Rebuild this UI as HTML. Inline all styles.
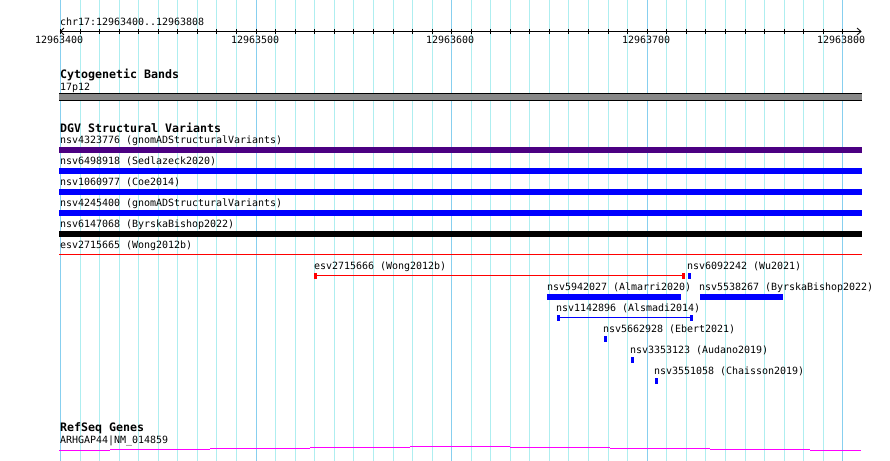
<!DOCTYPE html>
<html>
<head>
<meta charset="utf-8">
<style>
html,body{margin:0;padding:0;background:#fff;width:890px;height:461px;overflow:hidden}
svg{display:block;position:absolute;left:0;top:0}
text{font-family:"DejaVu Sans Mono","Liberation Mono",monospace;font-size:10px;letter-spacing:-0.02px;fill:#000;white-space:pre;text-rendering:geometricPrecision}
text.b{font-weight:bold;font-size:11.63px;letter-spacing:0}
</style>
</head>
<body>
<svg width="890" height="461" viewBox="0 0 890 461" shape-rendering="crispEdges">
<rect width="890" height="461" fill="#fff"/>
<path stroke="#aeeef0" stroke-width="1" fill="none" d="M80.5 0V461M99.5 0V461M119.5 0V461M138.5 0V461M158.5 0V461M177.5 0V461M197.5 0V461M216.5 0V461M236.5 0V461M275.5 0V461M295.5 0V461M314.5 0V461M334.5 0V461M353.5 0V461M373.5 0V461M393.5 0V461M412.5 0V461M432.5 0V461M471.5 0V461M490.5 0V461M510.5 0V461M529.5 0V461M549.5 0V461M568.5 0V461M588.5 0V461M608.5 0V461M627.5 0V461M666.5 0V461M686.5 0V461M705.5 0V461M725.5 0V461M745.5 0V461M764.5 0V461M784.5 0V461M803.5 0V461M823.5 0V461"/>
<path stroke="#87cfef" stroke-width="1" fill="none" d="M60.5 0V461M256.5 0V461M451.5 0V461M647.5 0V461M842.5 0V461"/>

<path stroke="#000" stroke-width="1" fill="none" d="M60 31.5H861M60.5 29V34M80.5 29V34M99.5 29V34M119.5 29V34M138.5 29V34M158.5 29V34M177.5 29V34M197.5 29V34M216.5 29V34M236.5 29V34M256.5 29V34M275.5 29V34M295.5 29V34M314.5 29V34M334.5 29V34M353.5 29V34M373.5 29V34M393.5 29V34M412.5 29V34M432.5 29V34M451.5 29V34M471.5 29V34M490.5 29V34M510.5 29V34M529.5 29V34M549.5 29V34M568.5 29V34M588.5 29V34M608.5 29V34M627.5 29V34M647.5 29V34M666.5 29V34M686.5 29V34M705.5 29V34M725.5 29V34M745.5 29V34M764.5 29V34M784.5 29V34M803.5 29V34M823.5 29V34M842.5 29V34"/>
<path stroke="#000" stroke-width="1" fill="none" shape-rendering="auto" d="M857 28L861 31.5L857 35M64 28L60.5 31.5L64 35"/>

<text x="60" y="25">chr17:12963400..12963808</text>
<text x="35" y="43">12963400</text>
<text x="231" y="43">12963500</text>
<text x="426" y="43">12963600</text>
<text x="622" y="43">12963700</text>
<text x="817" y="43">12963800</text>

<text class="b" x="60" y="78">Cytogenetic Bands</text>
<text x="60" y="90">17p12</text>
<rect x="59" y="93" width="803" height="8" fill="#000"/>
<rect x="59" y="94" width="803" height="6" fill="#888888"/>

<text class="b" x="60" y="132">DGV Structural Variants</text>
<text x="60" y="143">nsv4323776 (gnomADStructuralVariants)</text>
<rect x="59" y="147" width="803" height="6" fill="#4b0082"/>
<text x="60" y="164">nsv6498918 (Sedlazeck2020)</text>
<rect x="59" y="168" width="803" height="6" fill="#00f"/>
<text x="60" y="185">nsv1060977 (Coe2014)</text>
<rect x="59" y="189" width="803" height="6" fill="#00f"/>
<text x="60" y="206">nsv4245400 (gnomADStructuralVariants)</text>
<rect x="59" y="210" width="803" height="6" fill="#00f"/>
<text x="60" y="227">nsv6147068 (ByrskaBishop2022)</text>
<rect x="59" y="231" width="803" height="6" fill="#000"/>
<text x="60" y="248">esv2715665 (Wong2012b)</text>
<rect x="59" y="254" width="803" height="1" fill="#f00"/>

<text x="314" y="269">esv2715666 (Wong2012b)</text>
<rect x="314" y="275" width="368" height="1" fill="#f00"/>
<rect x="314" y="273" width="3" height="6" fill="#f00"/>
<rect x="682" y="273" width="3" height="6" fill="#f00"/>

<text x="687" y="269">nsv6092242 (Wu2021)</text>
<rect x="688" y="273" width="3" height="6" fill="#00f"/>

<text x="547" y="290">nsv5942027 (Almarri2020)</text>
<rect x="547" y="294" width="134" height="6" fill="#00f"/>

<text x="699" y="290">nsv5538267 (ByrskaBishop2022)</text>
<rect x="700" y="294" width="83" height="6" fill="#00f"/>

<text x="556" y="311">nsv1142896 (Alsmadi2014)</text>
<rect x="557" y="317" width="134" height="1" fill="#00f"/>
<rect x="557" y="315" width="3" height="6" fill="#00f"/>
<rect x="690" y="315" width="3" height="6" fill="#00f"/>

<text x="603" y="332">nsv5662928 (Ebert2021)</text>
<rect x="604" y="336" width="3" height="6" fill="#00f"/>

<text x="630" y="353">nsv3353123 (Audano2019)</text>
<rect x="631" y="357" width="3" height="6" fill="#00f"/>

<text x="654" y="374">nsv3551058 (Chaisson2019)</text>
<rect x="655" y="378" width="3" height="6" fill="#00f"/>

<text class="b" x="60" y="431">RefSeq Genes</text>
<text x="60" y="443">ARHGAP44|NM_014859</text>
<path stroke="#ff00ff" stroke-width="1" fill="none" d="M59 450.5H110M110 449.5H210M210 448.5H310M310 447.5H410M410 446.5H510M510 447.5H610M610 448.5H710M710 449.5H810M810 450.5H861"/>
</svg>
</body>
</html>
